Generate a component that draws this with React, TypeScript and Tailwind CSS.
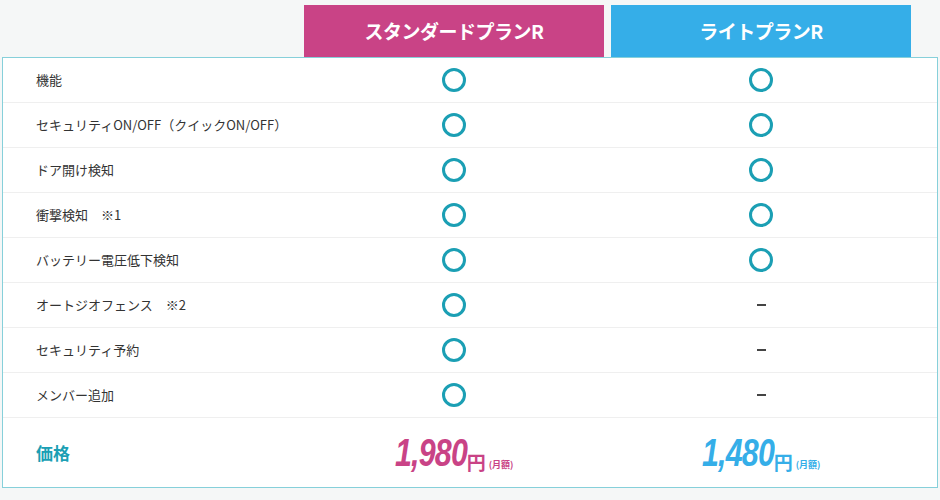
const features: { label: string; standard: boolean; lite: boolean }[] = [
  { label: "機能", standard: true, lite: true },
  { label: "セキュリティON/OFF（クイックON/OFF）", standard: true, lite: true },
  { label: "ドア開け検知", standard: true, lite: true },
  { label: "衝撃検知　※1", standard: true, lite: true },
  { label: "バッテリー電圧低下検知", standard: true, lite: true },
  { label: "オートジオフェンス　※2", standard: true, lite: false },
  { label: "セキュリティ予約", standard: true, lite: false },
  { label: "メンバー追加", standard: true, lite: false },
];

function Mark({ on }: { on: boolean }) {
  if (!on) return <span className="block h-[2px] w-[9px] bg-[#444]" />;
  return <span className="block h-[24px] w-[24px] rounded-full border-[3px] border-[#1b9fb4]" />;
}

function Price({ value, color }: { value: string; color: string }) {
  return (
    <div className={`flex items-end ${color}`}>
      <span className="-mr-[18px] inline-block origin-left scale-x-[0.8] text-[38px] leading-none font-bold italic tracking-[-1px] [font-family:'Liberation_Sans',sans-serif]">
        {value}
      </span>
      <span className="mb-[1px] text-[19px] leading-none font-bold">円</span>
      <span className="mb-[3px] ml-[3px] text-[9px] leading-none font-bold">(月額)</span>
    </div>
  );
}

export default function App() {
  return (
    <div className="h-[500px] w-[940px] bg-[#f5f7f7] px-[2px] pt-[5px] [font-family:'Noto_Sans_CJK_JP','Noto_Sans',sans-serif]">
      <div className="grid grid-cols-[302px_300px_7px_300px_1fr]">
        <div />
        <div className="flex h-[52px] items-center justify-center bg-[#c94386] text-[19px] font-bold tracking-[-0.5px] text-white">
          スタンダードプランR
        </div>
        <div />
        <div className="flex h-[52px] items-center justify-center bg-[#35aee8] text-[19px] font-bold tracking-[-0.5px] text-white">
          ライトプランR
        </div>
        <div />
      </div>
      <div className="border border-[#86d0da] bg-white">
        {features.map((f) => (
          <div
            key={f.label}
            className="grid h-[45px] grid-cols-[301px_300px_7px_300px_1fr] items-center border-b border-[#efefef]"
          >
            <div className="pl-[33px] text-[13px] text-[#333]">{f.label}</div>
            <div className="flex justify-center">
              <Mark on={f.standard} />
            </div>
            <div />
            <div className="flex justify-center">
              <Mark on={f.lite} />
            </div>
            <div />
          </div>
        ))}
        <div className="grid h-[69px] grid-cols-[301px_300px_7px_300px_1fr] items-center">
          <div className="pl-[33px] text-[17px] font-bold text-[#1b9fb4]">価格</div>
          <div className="flex justify-center">
            <Price value="1,980" color="text-[#c94386]" />
          </div>
          <div />
          <div className="flex justify-center">
            <Price value="1,480" color="text-[#35aee8]" />
          </div>
          <div />
        </div>
      </div>
    </div>
  );
}
